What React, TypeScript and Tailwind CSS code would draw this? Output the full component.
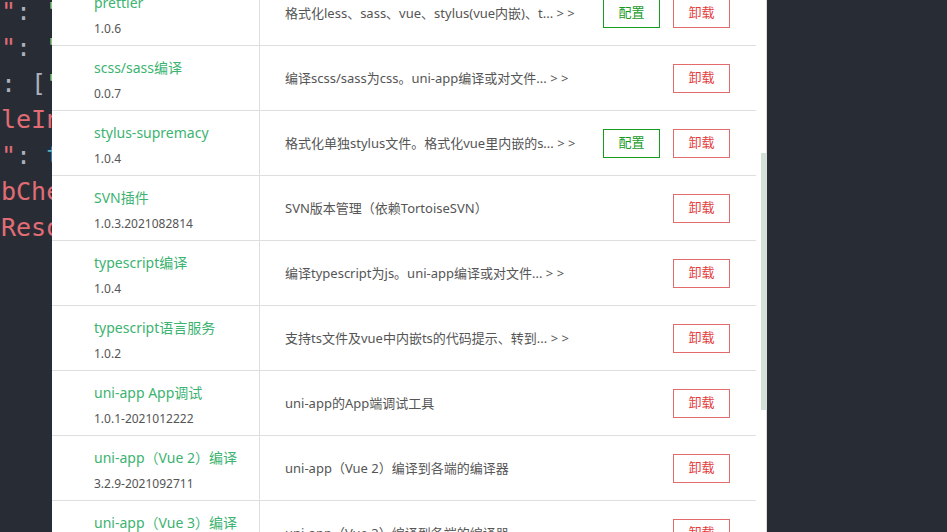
import React from "react";

type Row = { name: string; version: string; desc: string; config?: boolean };

const rows: Row[] = [
  { name: "prettier", version: "1.0.6", desc: "格式化less、sass、vue、stylus(vue内嵌)、t... > >", config: true },
  { name: "scss/sass编译", version: "0.0.7", desc: "编译scss/sass为css。uni-app编译或对文件... > >" },
  { name: "stylus-supremacy", version: "1.0.4", desc: "格式化单独stylus文件。格式化vue里内嵌的s... > >", config: true },
  { name: "SVN插件", version: "1.0.3.2021082814", desc: "SVN版本管理（依赖TortoiseSVN）" },
  { name: "typescript编译", version: "1.0.4", desc: "编译typescript为js。uni-app编译或对文件... > >" },
  { name: "typescript语言服务", version: "1.0.2", desc: "支持ts文件及vue中内嵌ts的代码提示、转到... > >" },
  { name: "uni-app App调试", version: "1.0.1-2021012222", desc: "uni-app的App端调试工具" },
  { name: "uni-app（Vue 2）编译", version: "3.2.9-2021092711", desc: "uni-app（Vue 2）编译到各端的编译器" },
  { name: "uni-app（Vue 3）编译", version: "3.2.9-2021092711", desc: "uni-app（Vue 3）编译到各端的编译器" },
];

const R = ({ children }: { children: React.ReactNode }) => <span className="text-[#e06c75]">{children}</span>;
const G = ({ children }: { children: React.ReactNode }) => <span className="text-[#abb2bf]">{children}</span>;
const Gr = ({ children }: { children: React.ReactNode }) => <span className="text-[#98c379]">{children}</span>;
const T = ({ children }: { children: React.ReactNode }) => <span className="text-[#56b6c2]">{children}</span>;

export default function App() {
  return (
    <div className="w-[947px] h-[532px] flex bg-[#282c34] overflow-hidden">
      <div
        className="w-[52px] shrink-0 overflow-hidden whitespace-pre text-[25px] leading-[36px] pl-[1px] mt-[-6px]"
        style={{ fontFamily: '"DejaVu Sans Mono", monospace' }}
      >
        <div><R>"</R><G>:</G> <Gr>"value"</Gr></div>
        <div><R>"</R><G>:</G> <Gr>"value"</Gr></div>
        <div><G>: [</G><Gr>"a"</Gr></div>
        <div><R>leInfo</R></div>
        <div><R>"</R><G>:</G> <T>true</T></div>
        <div><R>bCheck</R></div>
        <div><R>Resolve</R></div>
      </div>
      <div
        className="w-[715px] h-full shrink-0 bg-white flex border-r border-[#dcdcdc]"
        style={{ fontFamily: '"Noto Sans", "Noto Sans CJK SC", sans-serif' }}
      >
        <div className="w-[704px] shrink-0 flex flex-col mt-[-19px]">
          {rows.map((r, i) => (
            <div key={i} className="h-[65px] shrink-0 flex border-b border-[#dedede]">
              <div className="w-[208px] shrink-0 border-r border-[#dedede] pl-[42px] pt-[12px]">
                <div className="text-[14px] leading-[20px] text-[#3cb371] whitespace-nowrap">{r.name}</div>
                <div className="mt-[7px] text-[12px] leading-[18px] text-[#555555] whitespace-nowrap">{r.version}</div>
              </div>
              <div className="flex-1 flex items-center pl-[25px] pt-[2px] text-[13px] text-[#555555] whitespace-nowrap">
                {r.desc}
              </div>
              <div className="flex items-center gap-[13px] pr-[26px]">
                {r.config && (
                  <div className="w-[57px] h-[29px] flex items-center justify-center border border-[#179b1f] text-[#179b1f] text-[13px]">
                    配置
                  </div>
                )}
                <div className="w-[57px] h-[29px] flex items-center justify-center border border-[#e46b6b] text-[#e33c3c] text-[13px]">
                  卸载
                </div>
              </div>
            </div>
          ))}
        </div>
        <div className="flex-1 flex justify-end">
          <div className="w-[5px] h-[257px] mt-[153px] bg-[#d3e0d8]" />
        </div>
      </div>
    </div>
  );
}
